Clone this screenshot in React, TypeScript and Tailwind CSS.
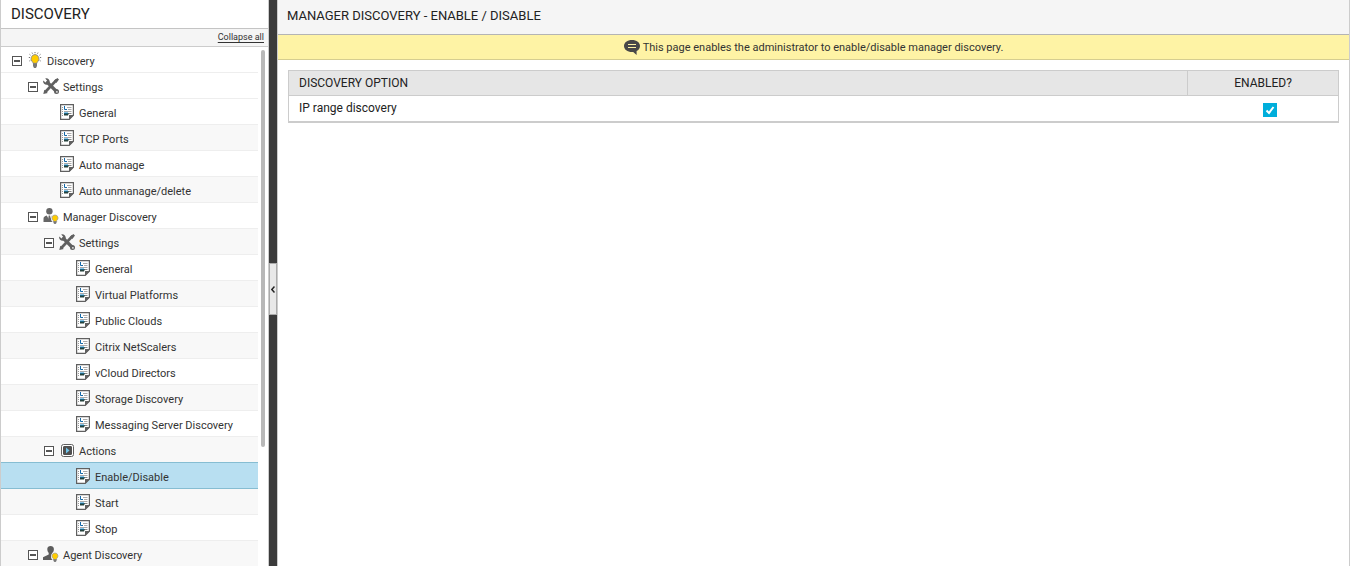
import { useState } from 'react'

type IconName = 'bulb' | 'tools' | 'page' | 'manager' | 'agent' | 'actions'

type TreeItem = {
  label: string
  depth: number
  icon: IconName
}

const items: TreeItem[] = [
  { label: 'Discovery', depth: 0, icon: 'bulb' },
  { label: 'Settings', depth: 1, icon: 'tools' },
  { label: 'General', depth: 2, icon: 'page' },
  { label: 'TCP Ports', depth: 2, icon: 'page' },
  { label: 'Auto manage', depth: 2, icon: 'page' },
  { label: 'Auto unmanage/delete', depth: 2, icon: 'page' },
  { label: 'Manager Discovery', depth: 1, icon: 'manager' },
  { label: 'Settings', depth: 2, icon: 'tools' },
  { label: 'General', depth: 3, icon: 'page' },
  { label: 'Virtual Platforms', depth: 3, icon: 'page' },
  { label: 'Public Clouds', depth: 3, icon: 'page' },
  { label: 'Citrix NetScalers', depth: 3, icon: 'page' },
  { label: 'vCloud Directors', depth: 3, icon: 'page' },
  { label: 'Storage Discovery', depth: 3, icon: 'page' },
  { label: 'Messaging Server Discovery', depth: 3, icon: 'page' },
  { label: 'Actions', depth: 2, icon: 'actions' },
  { label: 'Enable/Disable', depth: 3, icon: 'page' },
  { label: 'Start', depth: 3, icon: 'page' },
  { label: 'Stop', depth: 3, icon: 'page' },
  { label: 'Agent Discovery', depth: 1, icon: 'agent' },
]

const indents = ['pl-[11px]', 'pl-[27px]', 'pl-[43px]', 'pl-[59px]']

const SmallBulb = () => (
  <>
    <circle cx="12" cy="10.5" r="4" fill="#fff" />
    <path d="M12 7a3 3 0 0 0-1.700 5.500v1.300h3.400v-1.300A3 3 0 0 0 12 7z" fill="#fc0" stroke="#999" strokeWidth="0.700" />
    <path d="M10.500 13.300h3v1.700l-1 1h-1l-1-1z" fill="#777" />
  </>
)

const TreeIcon = ({ name }: { name: IconName }) => (
  <svg className="w-4 h-4 shrink-0" viewBox="0 0 16 16" fill="none" aria-hidden="true">
    {name === 'bulb' && (
      <>
        <path d="M8 2.500a4.200 4.200 0 0 0-2.700 7.200c.5.500.7 1 .7 1.600h4c0-.6.2-1.100.7-1.600A4.200 4.200 0 0 0 8 2.500z" fill="#fc0" stroke="#888" strokeWidth="0.900" />
        <path d="M6 11.200h4v2.800L9 16H7l-1-2z" fill="#777" />
        <path d="M8 0v1.200M5 .6l.5 1.100M11 .6l-.5 1.100M2.500 2.300l1 .9M13.500 2.300l-1 .9M1.800 5.500H3M14.200 5.500H13M2.300 9l1-.5M13.700 9l-1-.5" stroke="#777" />
      </>
    )}
    {name === 'tools' && (
      <>
        <path d="M2.300 14 13.500 2" stroke="#606060" strokeWidth="2.600" />
        <path d="m.3 16 1-4.200 3.500 3.200zM11 2.800 14.300 0 16 1.600l-2.700 3.400z" fill="#606060" />
        <path d="m4.500 4.500 9 9" stroke="#606060" strokeWidth="3.200" strokeLinecap="round" />
        <path d="M.2 2.400 2.600 4.600l1.700-1.700L2.300.4C4.700-.3 7.200 1.800 6.700 4.500L4.700 6.600C2 7.300-.4 5.200.2 2.400z" fill="#606060" />
        <circle cx="13.500" cy="13.500" r="2.500" fill="#606060" />
        <circle cx="13.900" cy="13.900" r="0.800" fill="#fff" />
      </>
    )}
    {name === 'page' && (
      <>
        <path d="M1.600.6h12.800v10.600l-4.200 4.200H1.600z" fill="#fff" stroke="#606060" strokeWidth="1.200" />
        <path d="M10 16v-5h5z" fill="#606060" />
        <path d="M3 3.500h1M3 5.500h1M3 7.500h1M3 9.500h1M3 11.500h1" stroke="#999" />
        <path d="M5.500 2v3.500H8" stroke="#1469a8" />
        <path d="M8 3.500h4.500M9 5.500h3.500M5 7.500h7.500" stroke="#aaa" />
        <path d="M5 9h5l-1 2.500H5z" fill="#26423d" />
        <path d="M5 9h4" stroke="#168bd0" />
        <path d="M10 9.500h2.500" stroke="#888" />
      </>
    )}
    {name === 'manager' && (
      <>
        <circle cx="6.400" cy="3.200" r="3.200" fill="#666" />
        <path d="M.5 14v-3.200C.5 9.200 1.700 8 3.800 7.600l2.500 4.600L8.900 7.600c1.800.3 3 1.400 3 3V14z" fill="#666" />
        <path d="M5.700 7.500h1.400l.6 4-1.300 1.500-1.300-1.500z" fill="#666" />
        <SmallBulb />
      </>
    )}
    {name === 'agent' && (
      <>
        <path d="M4.300 2.900C4.300 1 5.700 0 7.600 0s3.300 1 3.300 2.900c0 2-.7 3.100-1.500 3.900v1.500l3.700 1.500V14H0v-2.800l5.700-2.700V6.800c-.8-.8-1.400-2-1.400-3.900z" fill="#5c5c5c" />
        <SmallBulb />
      </>
    )}
    {name === 'actions' && (
      <>
        <rect x="2.500" y="2.500" width="12" height="12" rx="2" fill="#fff" stroke="#606060" />
        <rect x="4.500" y="4.500" width="8" height="8" rx="0.500" fill="#505050" stroke="#505050" />
        <path d="M7 5.500v6l3.500-3z" fill="#70c4ea" />
      </>
    )}
  </svg>
)

const Toggle = () => (
  <button type="button" aria-label="Collapse" className="mt-0.5 flex size-2.5 shrink-0 items-center justify-center border border-[#555] bg-white">
    <span className="h-0.5 w-1.5 bg-[#555]" />
  </button>
)

const rowColor = (index: number, selected: boolean) => {
  if (selected) return 'bg-[#b8dff1] border-[#86bdd2]'
  if (index > 2 && index % 2 === 1) return 'bg-[#f8f8f8] border-[#eee]'
  return 'bg-white border-[#eee]'
}

const Sidebar = () => {
  const [selected, setSelected] = useState(16)

  return (
    <aside className="flex w-[268px] shrink-0 flex-col border-l border-[#ccc] bg-white">
      <h1 className="h-[29px] border-b border-[#c4c4c4] pl-2.5 text-[15px] leading-7 text-[#222]">DISCOVERY</h1>
      <div className="flex h-[18px] justify-end border-b border-[#ccc] bg-[#f5f5f5] pr-1">
        <a href="#" className="text-[9px] leading-4 text-[#333] underline underline-offset-2">Collapse all</a>
      </div>
      <div className="flex min-h-0 flex-1 overflow-hidden">
        <ul className="min-w-0 flex-1">
          {items.map((item, i) => (
            <li
              key={i}
              className={`flex h-[26px] items-center border-b ${indents[item.depth]} ${rowColor(i, i === selected)} ${i === selected - 1 ? 'border-b-[#86bdd2]' : ''}`}
            >
              {item.icon === 'page' ? <span className="w-2.5 shrink-0" /> : <Toggle />}
              <button type="button" onClick={() => setSelected(i)} className="ml-[5px] flex items-center gap-1 whitespace-nowrap text-[11px] text-[#333]">
                <TreeIcon name={item.icon} />
                <span className="pt-1 leading-4">{item.label}</span>
              </button>
            </li>
          ))}
        </ul>
        <div className="w-2.5 shrink-0 pt-[3px] pl-[3px]">
          <div className="h-[397px] w-1 rounded-full bg-[#b8b8b8]" />
        </div>
      </div>
    </aside>
  )
}

const Splitter = () => (
  <div className="flex w-2.5 shrink-0 flex-col border-x border-[#ccc] bg-[#3b3b3b] pt-[263px]">
    <button type="button" aria-label="Hide panel" className="flex h-[52px] items-center justify-center border border-[#aaa] bg-[#e8e8e8]">
      <svg className="h-[7px] w-1" viewBox="0 0 4 7" fill="none">
        <path d="M3.500.5.8 3.500l2.700 3" stroke="#222" strokeWidth="1.500" />
      </svg>
    </button>
  </div>
)

const CommentIcon = () => (
  <svg className="h-[15px] w-4" viewBox="0 0 16 15" aria-hidden="true">
    <path d="M8 0c4.600 0 8 2.600 8 6 0 2.200-1.300 4-3.400 5.100V15L9.200 12H8c-4.600 0-8-2.600-8-6s3.400-6 8-6z" fill="#484848" />
    <path d="M4 4.500h8M4 7.500h8" stroke="#fef3a5" />
  </svg>
)

export default function App() {
  const [enabled, setEnabled] = useState(true)

  return (
    <div className="flex h-screen overflow-hidden bg-white font-['Roboto',sans-serif]">
      <Sidebar />
      <Splitter />
      <main className="min-w-0 flex-1 border-r border-[#ccc]">
        <h2 className="h-[35px] border-b border-[#b4b4b4] bg-[#f5f5f5] pl-[9px] text-[13px] leading-8 text-[#222]">
          MANAGER DISCOVERY - ENABLE / DISABLE
        </h2>
        <p className="flex h-[25px] items-center justify-center gap-[3px] border-b border-[#d5cd90] bg-[#fef3a5] text-[11px] text-[#333]">
          <CommentIcon />
          <span className="pt-0.5">This page enables the administrator to enable/disable manager discovery.</span>
        </p>
        <div className="px-2.5 pt-2.5">
          <table className="w-full table-fixed border-collapse border border-b-2 border-[#ccc] text-xs text-[#222]">
            <thead>
              <tr className="h-[25px] border-b border-[#ccc] bg-[#e6e6e6]">
                <th className="border-r border-[#ccc] pl-2.5 text-left font-normal">DISCOVERY OPTION</th>
                <th className="w-[151px] text-center font-normal">ENABLED?</th>
              </tr>
            </thead>
            <tbody>
              <tr className="h-[26px]">
                <td className="pl-2.5"><label htmlFor="ip-range">IP range discovery</label></td>
                <td>
                  <div className="flex justify-center pt-1 pl-3.5">
                    <span className="relative size-3.5">
                      <input
                        id="ip-range"
                        type="checkbox"
                        checked={enabled}
                        onChange={e => setEnabled(e.target.checked)}
                        className="block size-3.5 appearance-none border border-[#00aedb] checked:bg-[#00aedb]"
                      />
                      <svg className="pointer-events-none absolute inset-0 size-3.5" viewBox="0 0 14 14" fill="none">
                        <path d="m3.500 7.500 2.500 2.500 4.500-6" stroke="#fff" strokeWidth="2" />
                      </svg>
                    </span>
                  </div>
                </td>
              </tr>
            </tbody>
          </table>
        </div>
      </main>
    </div>
  )
}
